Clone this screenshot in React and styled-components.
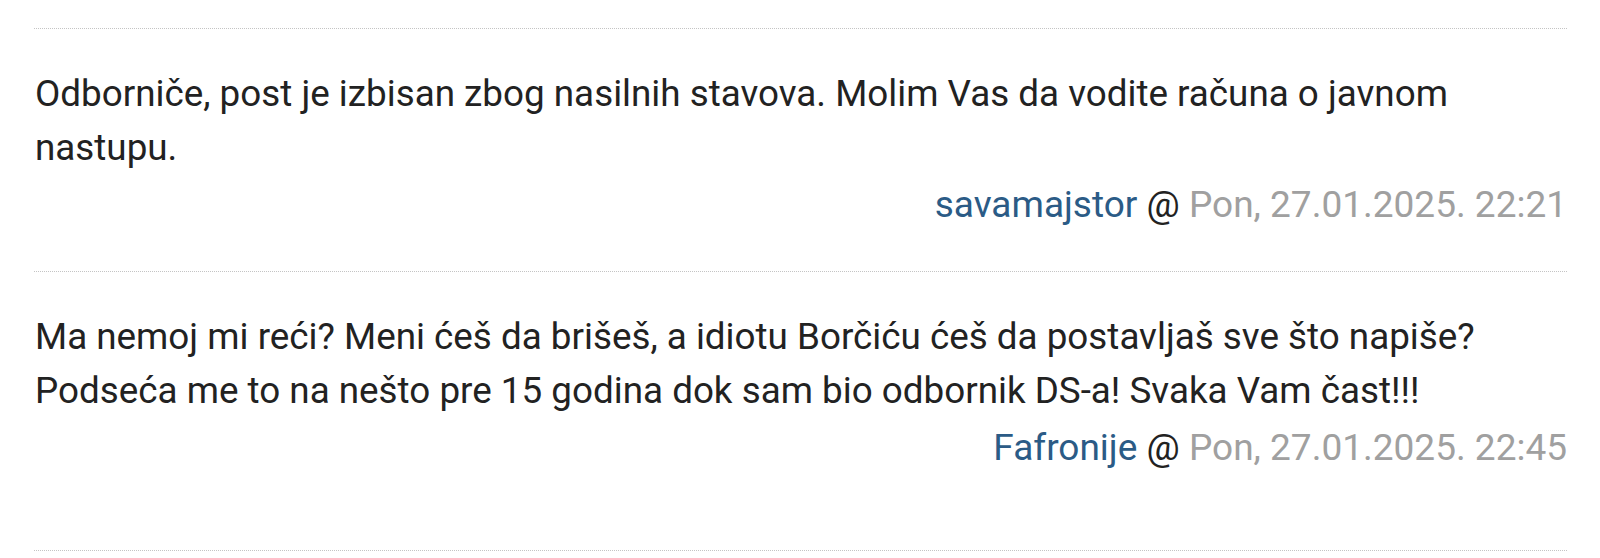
import React from "react";
import styled, { createGlobalStyle } from "styled-components";

const GlobalStyle = createGlobalStyle`
  body {
    margin: 0;
    background: #fff;
    font-family: Roboto, "Noto Sans", Arial, sans-serif;
  }
`;

const comments = [
  {
    id: 1,
    text: "Odborniče, post je izbisan zbog nasilnih stavova. Molim Vas da vodite računa o javnom nastupu.",
    user: "savamajstor",
    date: "Pon, 27.01.2025. 22:21",
  },
  {
    id: 2,
    text: "Ma nemoj mi reći? Meni ćeš da brišeš, a idiotu Borčiću ćeš da postavljaš sve što napiše? Podseća me to na nešto pre 15 godina dok sam bio odbornik DS-a! Svaka Vam čast!!!",
    user: "Fafronije",
    date: "Pon, 27.01.2025. 22:45",
    last: true,
  },
];

const App = () => {
  return (
    <>
      <GlobalStyle />
      <List>
        {comments.map((c) => (
          <Comment key={c.id} $last={c.last}>
            <Body>{c.text}</Body>
            <Meta>
              <User>{c.user}</User> <At>@</At> <Time>{c.date}</Time>
            </Meta>
          </Comment>
        ))}
        <Divider />
      </List>
    </>
  );
};

const List = styled.div`
  padding: 28px 33px 0 34px;
`;

const Comment = styled.div`
  border-top: 1px dotted #c4c4c4;
  padding: 38px 0 ${(p) => (p.$last ? "75px" : "39px")};
`;

const Body = styled.div`
  font-size: 36.8px;
  line-height: 54px;
  color: #222;
  padding-left: 1px;
  padding-right: 60px;
`;

const Meta = styled.div`
  margin-top: 2px;
  text-align: right;
  font-size: 37px;
  line-height: 55px;
  color: #a0a0a0;
`;

const User = styled.span`
  color: #2b5b86;
`;

const At = styled.span`
  color: #222;
`;

const Time = styled.span`
  color: #a0a0a0;
`;

const Divider = styled.div`
  border-top: 1px dotted #c4c4c4;
`;

export default App;
